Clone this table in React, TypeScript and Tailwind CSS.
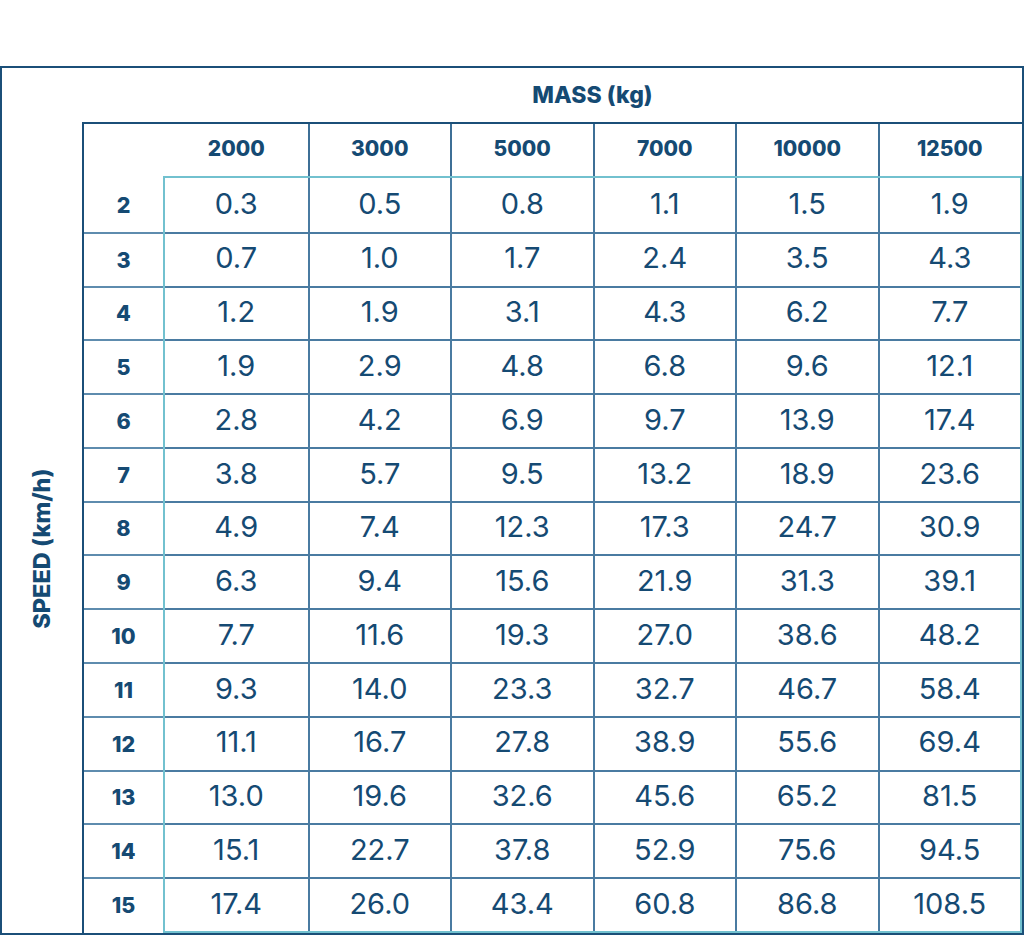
const masses = ["2000", "3000", "5000", "7000", "10000", "12500"];

const rows: { speed: string; values: string[] }[] = [
  { speed: "2", values: ["0.3", "0.5", "0.8", "1.1", "1.5", "1.9"] },
  { speed: "3", values: ["0.7", "1.0", "1.7", "2.4", "3.5", "4.3"] },
  { speed: "4", values: ["1.2", "1.9", "3.1", "4.3", "6.2", "7.7"] },
  { speed: "5", values: ["1.9", "2.9", "4.8", "6.8", "9.6", "12.1"] },
  { speed: "6", values: ["2.8", "4.2", "6.9", "9.7", "13.9", "17.4"] },
  { speed: "7", values: ["3.8", "5.7", "9.5", "13.2", "18.9", "23.6"] },
  { speed: "8", values: ["4.9", "7.4", "12.3", "17.3", "24.7", "30.9"] },
  { speed: "9", values: ["6.3", "9.4", "15.6", "21.9", "31.3", "39.1"] },
  { speed: "10", values: ["7.7", "11.6", "19.3", "27.0", "38.6", "48.2"] },
  { speed: "11", values: ["9.3", "14.0", "23.3", "32.7", "46.7", "58.4"] },
  { speed: "12", values: ["11.1", "16.7", "27.8", "38.9", "55.6", "69.4"] },
  { speed: "13", values: ["13.0", "19.6", "32.6", "45.6", "65.2", "81.5"] },
  { speed: "14", values: ["15.1", "22.7", "37.8", "52.9", "75.6", "94.5"] },
  { speed: "15", values: ["17.4", "26.0", "43.4", "60.8", "86.8", "108.5"] },
];

export default function App() {
  return (
    <div className="w-[1024px] h-[948px] bg-white pt-[66px] font-['Inter',sans-serif] text-[#154a73]">
      {/* outer frame */}
      <div className="flex w-[1024px] h-[869px] border-2 border-[#1b4f78]">
        {/* speed axis label */}
        <div className="w-[80px] flex items-center justify-center pt-[96px]">
          <span className="-rotate-90 whitespace-nowrap text-[23.5px] font-extrabold">
            SPEED (km/h)
          </span>
        </div>

        <div className="flex-1 flex flex-col">
          {/* mass axis label */}
          <div className="h-[54px] flex items-center justify-center pl-[81px]">
            <span className="text-[23px] font-extrabold">MASS (kg)</span>
          </div>

          {/* table */}
          <div className="flex-1 flex flex-col border-t-2 border-l-2 border-[#1b4f78]">
            {/* column headers */}
            <div className="h-[52px] flex">
              <div className="w-[81px]" />
              <div className="flex-1 grid grid-cols-6 pr-[2px]">
                {masses.map((m, i) => (
                  <div
                    key={m}
                    className={
                      i === 0
                        ? "flex items-center justify-center pb-[2px] text-[21px] font-extrabold"
                        : "flex items-center justify-center pb-[2px] text-[21px] font-extrabold border-l-2 border-[#3d6f96]"
                    }
                  >
                    {m}
                  </div>
                ))}
              </div>
            </div>

            {/* body */}
            <div className="flex-1 flex">
              {/* speed values */}
              <div className="w-[79px] grid grid-rows-[repeat(14,1fr)] py-[2px]">
                {rows.map((r, i) => (
                  <div
                    key={r.speed}
                    className={
                      i === 0
                        ? "flex items-center justify-center text-[21.5px] font-extrabold"
                        : "flex items-center justify-center text-[21.5px] font-extrabold border-t-2 border-[#5e8cae]"
                    }
                  >
                    {r.speed}
                  </div>
                ))}
              </div>

              {/* data cells */}
              <div className="flex-1 grid grid-cols-6 grid-rows-[repeat(14,1fr)] border-2 border-[#72c1cf]">
                {rows.map((r, ri) =>
                  r.values.map((v, ci) => (
                    <div
                      key={`${ri}-${ci}`}
                      className={[
                        "flex items-center justify-center pb-[3px] text-[29px] font-normal border-[#4a7ba1]",
                        ri > 0 ? "border-t-2" : "",
                        ci > 0 ? "border-l-2" : "",
                      ].join(" ")}
                    >
                      {v}
                    </div>
                  ))
                )}
              </div>
            </div>
          </div>
        </div>
      </div>
    </div>
  );
}
